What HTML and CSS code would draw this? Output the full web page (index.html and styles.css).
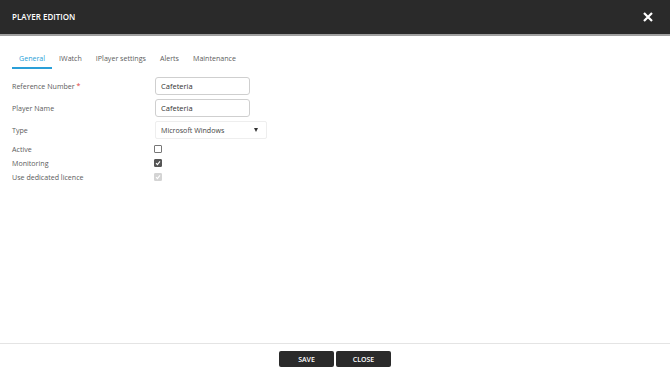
FILE: index.html
```html
<!DOCTYPE html>
<html lang="en">
<head>
    <meta charset="UTF-8">
    <title>Player Edition</title>
    <link rel="stylesheet" href="styles.css">
</head>
<body>
    <div class="dialog">
        <div class="dialog-header">
            <span class="dialog-title">PLAYER EDITION</span>
            <svg class="close-icon" width="10" height="10" viewBox="0 0 10 10">
                <path d="M1 1 L9 9 M9 1 L1 9" stroke="#fff" stroke-width="2.2"/>
            </svg>
        </div>

        <div class="dialog-body">
            <div class="tabs">
                <div class="tab active">General</div>
                <div class="tab">IWatch</div>
                <div class="tab">IPlayer settings</div>
                <div class="tab">Alerts</div>
                <div class="tab">Maintenance</div>
            </div>

            <div class="form">
                <div class="form-row field">
                    <label>Reference Number <span class="required">*</span></label>
                    <div class="text-input">Cafeteria</div>
                </div>
                <div class="form-row field">
                    <label>Player Name</label>
                    <div class="text-input">Cafeteria</div>
                </div>
                <div class="form-row field select-row">
                    <label>Type</label>
                    <div class="select-input">
                        <span>Microsoft Windows</span>
                        <span class="caret"></span>
                    </div>
                </div>
                <div class="form-row check">
                    <label>Active</label>
                    <span class="checkbox"></span>
                </div>
                <div class="form-row check">
                    <label>Monitoring</label>
                    <span class="checkbox checked">
                        <svg width="6" height="6" viewBox="0 0 6 6"><path d="M1 3.2 L2.4 4.6 L5 1.4" stroke="#fff" stroke-width="1.1" fill="none"/></svg>
                    </span>
                </div>
                <div class="form-row check">
                    <label>Use dedicated licence</label>
                    <span class="checkbox disabled">
                        <svg width="6" height="6" viewBox="0 0 6 6"><path d="M1 3.2 L2.4 4.6 L5 1.4" stroke="#fff" stroke-width="1.1" fill="none"/></svg>
                    </span>
                </div>
            </div>
        </div>

        <div class="dialog-footer">
            <button class="btn">SAVE</button>
            <button class="btn">CLOSE</button>
        </div>
    </div>
</body>
</html>
```

FILE: styles.css
```css
* {
    box-sizing: border-box;
}
body {
    margin: 0;
    font-family: 'Open Sans', 'Noto Sans', sans-serif;
    font-size: 7.1px;
    line-height: 10px;
    color: #5c5c5c;
    background: #fff;
}
.dialog {
    display: flex;
    flex-direction: column;
    height: 374px;
}
.dialog-header {
    height: 36px;
    background: #2a2a2a;
    border-bottom: 2px solid #a0a0a0;
    display: flex;
    align-items: center;
    justify-content: space-between;
    padding: 0 17px 0 12px;
}
.dialog-title {
    color: #fff;
    font-size: 8px;
    font-weight: 600;
}
.close-icon {
    display: block;
}
.dialog-body {
    flex: 1;
    padding: 14px 12px 0;
}
.tabs {
    display: flex;
    height: 19px;
}
.tab {
    padding: 3px 7px 0;
    border-bottom: 2px solid transparent;
}
.tab.active {
    color: #2a9fd8;
    border-bottom-color: #2a9fd8;
}
.form {
    display: flex;
    flex-direction: column;
    margin-top: 8px;
}
.form-row {
    display: flex;
    align-items: center;
}
.form-row label {
    width: 143px;
}
.form-row.field {
    margin-bottom: 4px;
}
.form-row.select-row {
    margin-bottom: 3px;
}
.form-row.check {
    height: 14px;
}
.required {
    color: #e0413a;
}
.text-input {
    width: 95px;
    height: 18px;
    border: 1px solid #cfcfcf;
    border-radius: 3px;
    padding: 0 5px;
    line-height: 16px;
    font-size: 7.5px;
    color: #333;
}
.select-input {
    width: 112px;
    height: 18px;
    border: 1px solid #eee;
    border-radius: 2px;
    display: flex;
    align-items: center;
    justify-content: space-between;
    padding: 0 8px 0 5px;
    color: #444;
}
.caret {
    width: 0;
    height: 0;
    border-left: 2.5px solid transparent;
    border-right: 2.5px solid transparent;
    border-top: 4px solid #333;
}
.checkbox {
    width: 8px;
    height: 8px;
    border: 1px solid #777;
    border-radius: 1px;
    margin-left: -1px;
    display: flex;
    align-items: center;
    justify-content: center;
}
.checkbox.checked {
    background: #555;
    border-color: #555;
}
.checkbox.disabled {
    background: #d4d4d4;
    border-color: #d4d4d4;
}
.dialog-footer {
    height: 31px;
    border-top: 1px solid #e4e4e4;
    display: flex;
    justify-content: center;
    padding-top: 7px;
    gap: 2px;
}
.btn {
    width: 55px;
    height: 16px;
    background: #2a2a2a;
    color: #fff;
    border: 0;
    border-radius: 2px;
    font-family: inherit;
    font-size: 7px;
    font-weight: 600;
    padding: 0;
}
```
